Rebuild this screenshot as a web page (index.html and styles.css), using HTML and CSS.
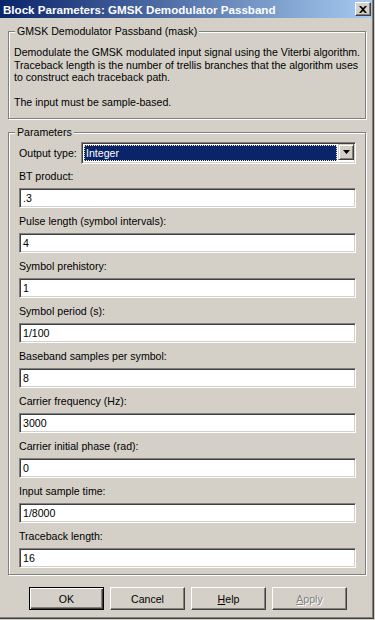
FILE: index.html
```html
<!DOCTYPE html>
<html lang="en">
<head>
    <meta charset="UTF-8">
    <meta name="viewport" content="width=device-width, initial-scale=1.0">
    <title>Block Parameters: GMSK Demodulator Passband</title>
    <link rel="stylesheet" href="styles.css">
</head>
<body>

    <div class="window">
        <!-- Barra de titulo -->
        <div class="titlebar">
            <span class="title">Block Parameters: GMSK Demodulator Passband</span>
            <span class="close-btn">
                <svg width="8" height="7" viewBox="0 0 8 7"><path d="M0 0h2l2 2 2-2h2L5 3.5 8 7H6L4 5 2 7H0l3-3.5z" fill="#000"/></svg>
            </span>
        </div>

        <div class="client">
            <div class="group desc">
                <span class="legend">GMSK Demodulator Passband (mask)</span>
                <p>Demodulate the GMSK modulated input signal using the Viterbi algorithm.<br>Traceback length is the number of trellis branches that the algorithm uses<br>to construct each traceback path.</p>
                <p class="blank">&nbsp;</p>
                <p>The input must be sample-based.</p>
            </div>

            <div class="group params">
                <span class="legend">Parameters</span>

                <div class="combo-row">
                    <label>Output type:</label>
                    <div class="combo">
                        <div class="combo-value"><span>Integer</span></div>
                        <div class="combo-arrow">
                            <svg width="7" height="4" viewBox="0 0 7 4"><path d="M0 0h7L3.5 4z" fill="#000"/></svg>
                        </div>
                    </div>
                </div>

                <div class="field"><label>BT product:</label><div class="edit">.3</div></div>
                <div class="field"><label>Pulse length (symbol intervals):</label><div class="edit">4</div></div>
                <div class="field"><label>Symbol prehistory:</label><div class="edit">1</div></div>
                <div class="field"><label>Symbol period (s):</label><div class="edit">1/100</div></div>
                <div class="field"><label>Baseband samples per symbol:</label><div class="edit">8</div></div>
                <div class="field"><label>Carrier frequency (Hz):</label><div class="edit">3000</div></div>
                <div class="field"><label>Carrier initial phase (rad):</label><div class="edit">0</div></div>
                <div class="field"><label>Input sample time:</label><div class="edit">1/8000</div></div>
                <div class="field"><label>Traceback length:</label><div class="edit">16</div></div>
            </div>

            <!-- Botoes -->
            <div class="buttons">
                <button class="btn default">OK</button>
                <button class="btn">Cancel</button>
                <button class="btn"><u>H</u>elp</button>
                <button class="btn disabled"><u>A</u>pply</button>
            </div>
        </div>
    </div>

</body>
</html>
```

FILE: styles.css
```css
/* Dialogo estilo Windows 2000 */
body {
    margin: 0;
    background-color: #d4d0c8;
    font-family: "Liberation Sans", Arial, sans-serif;
    font-size: 10.6px;
    color: #000;
}

.window {
    width: 373px;
    height: 618px;
    border-right: 1px solid #404040;
    border-bottom: 1px solid #404040;
    box-shadow: inset -1px -1px 0 #808080;
    background-color: #d4d0c8;
}

.titlebar {
    height: 18px;
    width: 372px;
    display: flex;
    align-items: center;
    justify-content: space-between;
    background: linear-gradient(to right, #0a246a, #a6caf0);
}

.title {
    color: #fff;
    font-weight: bold;
    font-size: 11.6px;
    padding-left: 3px;
    white-space: nowrap;
}

.close-btn {
    width: 14px;
    height: 12px;
    margin-right: 1px;
    display: flex;
    align-items: center;
    justify-content: center;
    background-color: #d4d0c8;
    border-top: 1px solid #fff;
    border-left: 1px solid #fff;
    border-right: 1px solid #404040;
    border-bottom: 1px solid #404040;
    box-shadow: inset -1px -1px 0 #808080;
}

.client {
    padding: 13px 6px 0 8px;
}

/* Caixas de grupo */
.group {
    position: relative;
    width: 356px;
    border: 1px solid #808080;
    box-shadow: 1px 1px 0 #fff, inset 1px 1px 0 #fff;
}

.legend {
    position: absolute;
    top: -7px;
    left: 6px;
    padding: 0 2px;
    line-height: 13px;
    background-color: #d4d0c8;
    white-space: nowrap;
}

.desc {
    height: 86px;
    padding: 0 4px 0 5px;
    box-sizing: content-box;
    width: 347px;
}

.desc p {
    margin: 0;
    line-height: 12.5px;
    white-space: nowrap;
}

.desc p:first-of-type {
    margin-top: 14px;
}

.params {
    margin-top: 13px;
    padding: 10px 9px 6px 10px;
    width: 337px;
}

.combo-row {
    display: flex;
    align-items: center;
    height: 20px;
    margin-bottom: 6px;
}

.combo-row label {
    width: 62px;
}

.combo {
    flex: 1;
    height: 16px;
    display: flex;
    padding: 2px;
    border-top: 1px solid #808080;
    border-left: 1px solid #808080;
    border-right: 1px solid #fff;
    border-bottom: 1px solid #fff;
    box-shadow: inset 1px 1px 0 #404040, inset -1px -1px 0 #d4d0c8;
    background-color: #fff;
    box-sizing: content-box;
}

.combo-value {
    flex: 1;
    background-color: #0a246a;
    color: #fff;
    outline: 1px dotted #f2e6a0;
    outline-offset: -1px;
    display: flex;
    align-items: center;
    padding-left: 2px;
}

.combo-arrow {
    width: 14px;
    height: 14px;
    display: flex;
    align-items: center;
    justify-content: center;
    background-color: #d4d0c8;
    border-top: 1px solid #d4d0c8;
    border-left: 1px solid #d4d0c8;
    border-right: 1px solid #404040;
    border-bottom: 1px solid #404040;
    box-shadow: inset 1px 1px 0 #fff, inset -1px -1px 0 #808080;
    margin: -1px -1px -1px 1px;
}

.field label {
    display: block;
    height: 14px;
    line-height: 14px;
    margin-bottom: 5px;
}

.field {
    margin-bottom: 6px;
}

.field:last-child {
    margin-bottom: 0;
}

.edit {
    height: 16px;
    line-height: 16px;
    padding: 1px 3px;
    background-color: #fff;
    border-top: 1px solid #808080;
    border-left: 1px solid #808080;
    border-right: 1px solid #fff;
    border-bottom: 1px solid #fff;
    box-shadow: inset 1px 1px 0 #404040, inset -1px -1px 0 #d4d0c8;
}

/* Botoes */
.buttons {
    display: flex;
    gap: 6px;
    margin-top: 12px;
    padding-left: 21px;
}

.btn {
    width: 75px;
    height: 23px;
    padding: 0;
    font-family: "Liberation Sans", Arial, sans-serif;
    font-size: 10.6px;
    color: #000;
    background-color: #d4d0c8;
    border-top: 1px solid #fff;
    border-left: 1px solid #fff;
    border-right: 1px solid #404040;
    border-bottom: 1px solid #404040;
    box-shadow: inset -1px -1px 0 #808080;
    border-radius: 0;
}

.btn.default {
    border: 1px solid #000;
    box-shadow: inset 1px 1px 0 #fff, inset -1px -1px 0 #404040, inset -2px -2px 0 #808080;
}

.btn.disabled {
    color: #808080;
    text-shadow: 1px 1px 0 #fff;
}
```
